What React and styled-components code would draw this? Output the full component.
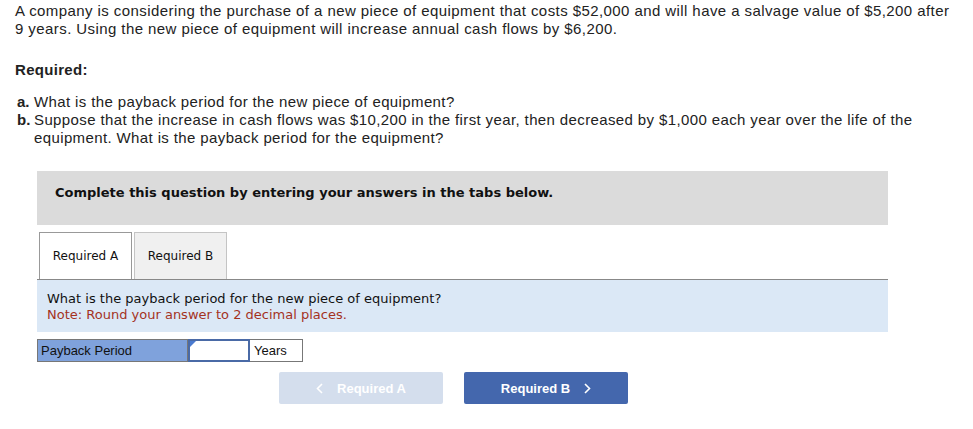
import React from 'react';
import styled, { createGlobalStyle } from 'styled-components';

const Global = createGlobalStyle`
  body {
    margin: 0;
    background: #fff;
  }
`;

const Page = styled.div`
  padding: 2px 22px 0 15px;
  width: 973px;
  box-sizing: border-box;
  font-family: 'Liberation Sans', Arial, sans-serif;
  color: #222;
`;

const Para = styled.p`
  margin: 0;
  font-size: 15px;
  line-height: 18px;
  letter-spacing: 0.42px;
`;

const Heading = styled.p`
  margin: 23px 0 0 0;
  font-size: 15px;
  line-height: 18px;
  font-weight: bold;
  letter-spacing: 0.3px;
`;

const List = styled.ol`
  list-style: none;
  margin: 14px 0 0 0;
  padding: 0;
  font-size: 15px;
  line-height: 18px;
  letter-spacing: 0.38px;
`;

const ListItem = styled.li`
  display: flex;
  padding-left: 2px;
`;

const Marker = styled.b`
  width: 17px;
  flex: none;
  letter-spacing: 0;
`;

const Work = styled.div`
  margin: 24px 0 0 22px;
  width: 851px;
  font-family: Verdana, 'DejaVu Sans', sans-serif;
`;

const Instruction = styled.div`
  background: #dbdbdb;
  height: 54px;
  box-sizing: border-box;
  padding: 14px 0 0 18px;
  font-size: 13px;
  line-height: 16px;
  font-weight: bold;
  color: #111;
`;

const TabRow = styled.div`
  margin-top: 7px;
  display: flex;
  gap: 2px;
  padding-left: 2px;
  border-bottom: 1px solid #888;
`;

const Tab = styled.div`
  width: 91px;
  height: 46px;
  display: flex;
  align-items: center;
  justify-content: center;
  font-size: 12px;
  color: #111;
  border: 1px solid ${p => (p.active ? '#999' : '#c4c4c4')};
  border-bottom: none;
  background: ${p => (p.active ? '#fff' : '#f0f0f0')};
  margin-bottom: ${p => (p.active ? '-1px' : '0')};
  position: relative;
`;

const Prompt = styled.div`
  background: #dbe8f6;
  padding: 11px 10px 9px;
  font-size: 13px;
  line-height: 16px;
  color: #111;
`;

const Note = styled.div`
  color: #a4321e;
`;

const AnswerRow = styled.div`
  margin-top: 7px;
  display: flex;
  font-family: 'Liberation Sans', Arial, sans-serif;
  font-size: 13px;
`;

const LabelCell = styled.div`
  width: 151px;
  height: 23px;
  box-sizing: border-box;
  background: #7fa2dc;
  border: 1px solid #777;
  display: flex;
  align-items: center;
  padding-left: 3px;
  color: #111;
`;

const InputCell = styled.div`
  position: relative;
  width: 62px;
  height: 23px;
  box-sizing: border-box;
  border: 2px solid #4a6aa6;
  background: #fff;
`;

const Flag = styled.span`
  position: absolute;
  top: 0;
  left: 0;
  width: 0;
  height: 0;
  border-top: 6px solid #4a7ad0;
  border-right: 6px solid transparent;
`;

const Field = styled.input`
  width: 100%;
  height: 100%;
  border: none;
  outline: none;
  box-sizing: border-box;
  background: transparent;
`;

const UnitCell = styled.div`
  width: 53px;
  height: 23px;
  box-sizing: border-box;
  border: 1px solid #777;
  border-left: none;
  display: flex;
  align-items: center;
  padding-left: 4px;
  color: #111;
`;

const NavRow = styled.div`
  margin-top: 10px;
  display: flex;
  gap: 21px;
  padding-left: 242px;
`;

const NavButton = styled.button`
  width: 164px;
  height: 32px;
  border: none;
  border-radius: 2px;
  background: ${p => (p.disabled ? '#d4deed' : '#4467ad')};
  color: #fff;
  font-family: 'Liberation Sans', Arial, sans-serif;
  font-size: 13px;
  font-weight: bold;
  display: flex;
  align-items: center;
  justify-content: center;
  gap: 14px;
  padding: 0;
  cursor: ${p => (p.disabled ? 'default' : 'pointer')};
`;

const Chevron = ({ dir }) => (
  <svg width="7" height="11" viewBox="0 0 7 11" fill="none">
    <path
      d={dir === 'left' ? 'M6 1L1.5 5.5L6 10' : 'M1 1L5.5 5.5L1 10'}
      stroke="#fff"
      strokeWidth="1.6"
    />
  </svg>
);

export default function App() {
  return (
    <Page>
      <Global />
      <Para>
        A company is considering the purchase of a new piece of equipment that costs $52,000 and will have a salvage value of $5,200 after 9 years. Using the new piece of equipment will increase annual cash flows by $6,200.
      </Para>
      <Heading>Required:</Heading>
      <List>
        <ListItem>
          <Marker>a.</Marker>
          <span>What is the payback period for the new piece of equipment?</span>
        </ListItem>
        <ListItem>
          <Marker>b.</Marker>
          <span>
            Suppose that the increase in cash flows was $10,200 in the first year, then decreased by $1,000 each year over the life of the equipment. What is the payback period for the equipment?
          </span>
        </ListItem>
      </List>
      <Work>
        <Instruction>Complete this question by entering your answers in the tabs below.</Instruction>
        <TabRow>
          <Tab active>Required A</Tab>
          <Tab>Required B</Tab>
        </TabRow>
        <Prompt>
          <div>What is the payback period for the new piece of equipment?</div>
          <Note>Note: Round your answer to 2 decimal places.</Note>
        </Prompt>
        <AnswerRow>
          <LabelCell>Payback Period</LabelCell>
          <InputCell>
            <Flag />
            <Field type="text" aria-label="Payback Period" />
          </InputCell>
          <UnitCell>Years</UnitCell>
        </AnswerRow>
        <NavRow>
          <NavButton disabled>
            <Chevron dir="left" />
            Required A
          </NavButton>
          <NavButton>
            Required B
            <Chevron dir="right" />
          </NavButton>
        </NavRow>
      </Work>
    </Page>
  );
}
